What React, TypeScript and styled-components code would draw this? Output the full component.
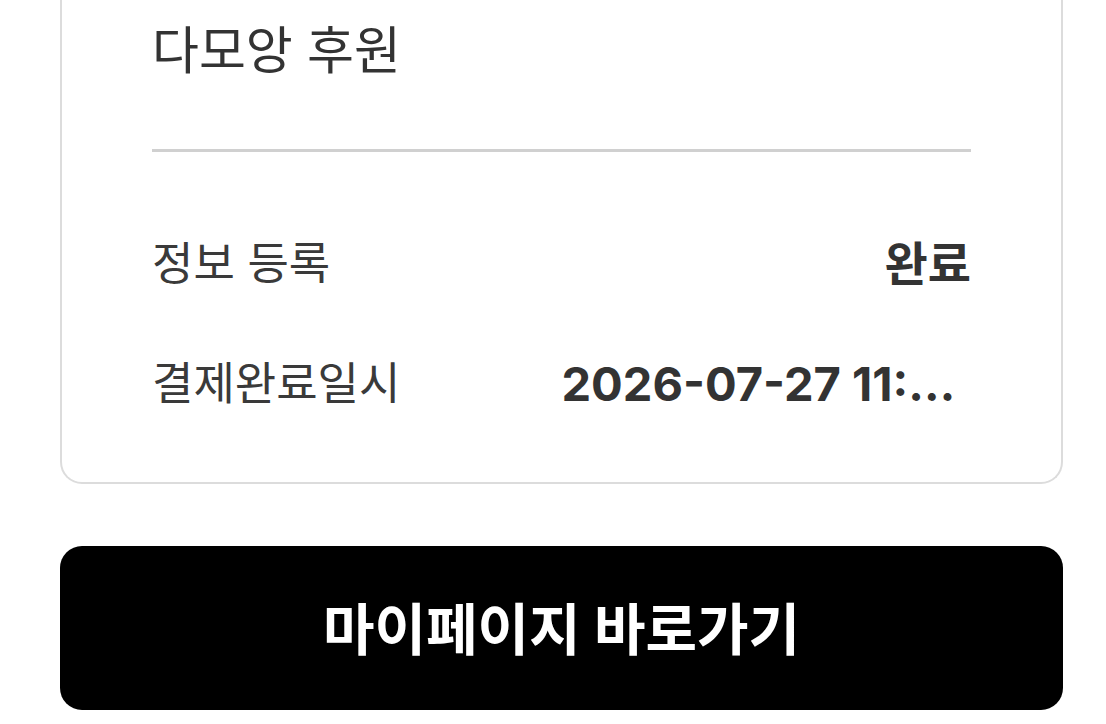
import React from "react";
import styled, { createGlobalStyle } from "styled-components";

const GlobalStyle = createGlobalStyle`
  html, body {
    margin: 0;
    padding: 0;
    background: #ffffff;
  }
  body {
    font-family: "Inter", "Noto Sans CJK KR", sans-serif;
    color: #333333;
    overflow: hidden;
  }
`;

const Page = styled.main`
  display: flex;
  flex-direction: column;
  gap: 62px;
  width: 1003px;
  padding-left: 60px;
`;

const Card = styled.section`
  display: flex;
  flex-direction: column;
  border: 2px solid #dcdcdc;
  border-top: none;
  border-radius: 0 0 22px 22px;
  padding: 0 90px;
  background: #ffffff;
`;

const Title = styled.h2`
  margin: 0;
  padding: 21px 0 68px;
  font-size: 51px;
  line-height: 60px;
  font-weight: 400;
  color: #333333;
  border-bottom: 3px solid #d0d0d0;
`;

const InfoList = styled.dl`
  display: flex;
  flex-direction: column;
  gap: 60px;
  margin: 0;
  padding: 82px 0 68px;
`;

const InfoRow = styled.div`
  display: flex;
  justify-content: space-between;
  align-items: center;
  gap: 24px;
  line-height: 60px;
`;

const Label = styled.dt`
  flex-shrink: 0;
  font-size: 45px;
  font-weight: 400;
  color: #3a3a3a;
`;

const Value = styled.dd`
  margin: 0;
  max-width: 50%;
  font-size: 47px;
  font-weight: 700;
  color: #333333;
  white-space: nowrap;
  overflow: hidden;
  text-overflow: ellipsis;
`;

const ActionButton = styled.button`
  display: flex;
  align-items: center;
  justify-content: center;
  height: 164px;
  padding-bottom: 6px;
  border: none;
  border-radius: 22px;
  background: #000000;
  color: #ffffff;
  font-family: "Inter", "Noto Sans CJK KR", sans-serif;
  font-size: 56px;
  font-weight: 700;
  cursor: pointer;
`;

export default function App() {
  return (
    <>
      <GlobalStyle />
      <Page>
        <Card>
          <Title>다모앙 후원</Title>
          <InfoList>
            <InfoRow>
              <Label>정보 등록</Label>
              <Value>완료</Value>
            </InfoRow>
            <InfoRow>
              <Label>결제완료일시</Label>
              <Value>2026-07-27 11:42:18</Value>
            </InfoRow>
          </InfoList>
        </Card>
        <ActionButton type="button">마이페이지 바로가기</ActionButton>
      </Page>
    </>
  );
}
